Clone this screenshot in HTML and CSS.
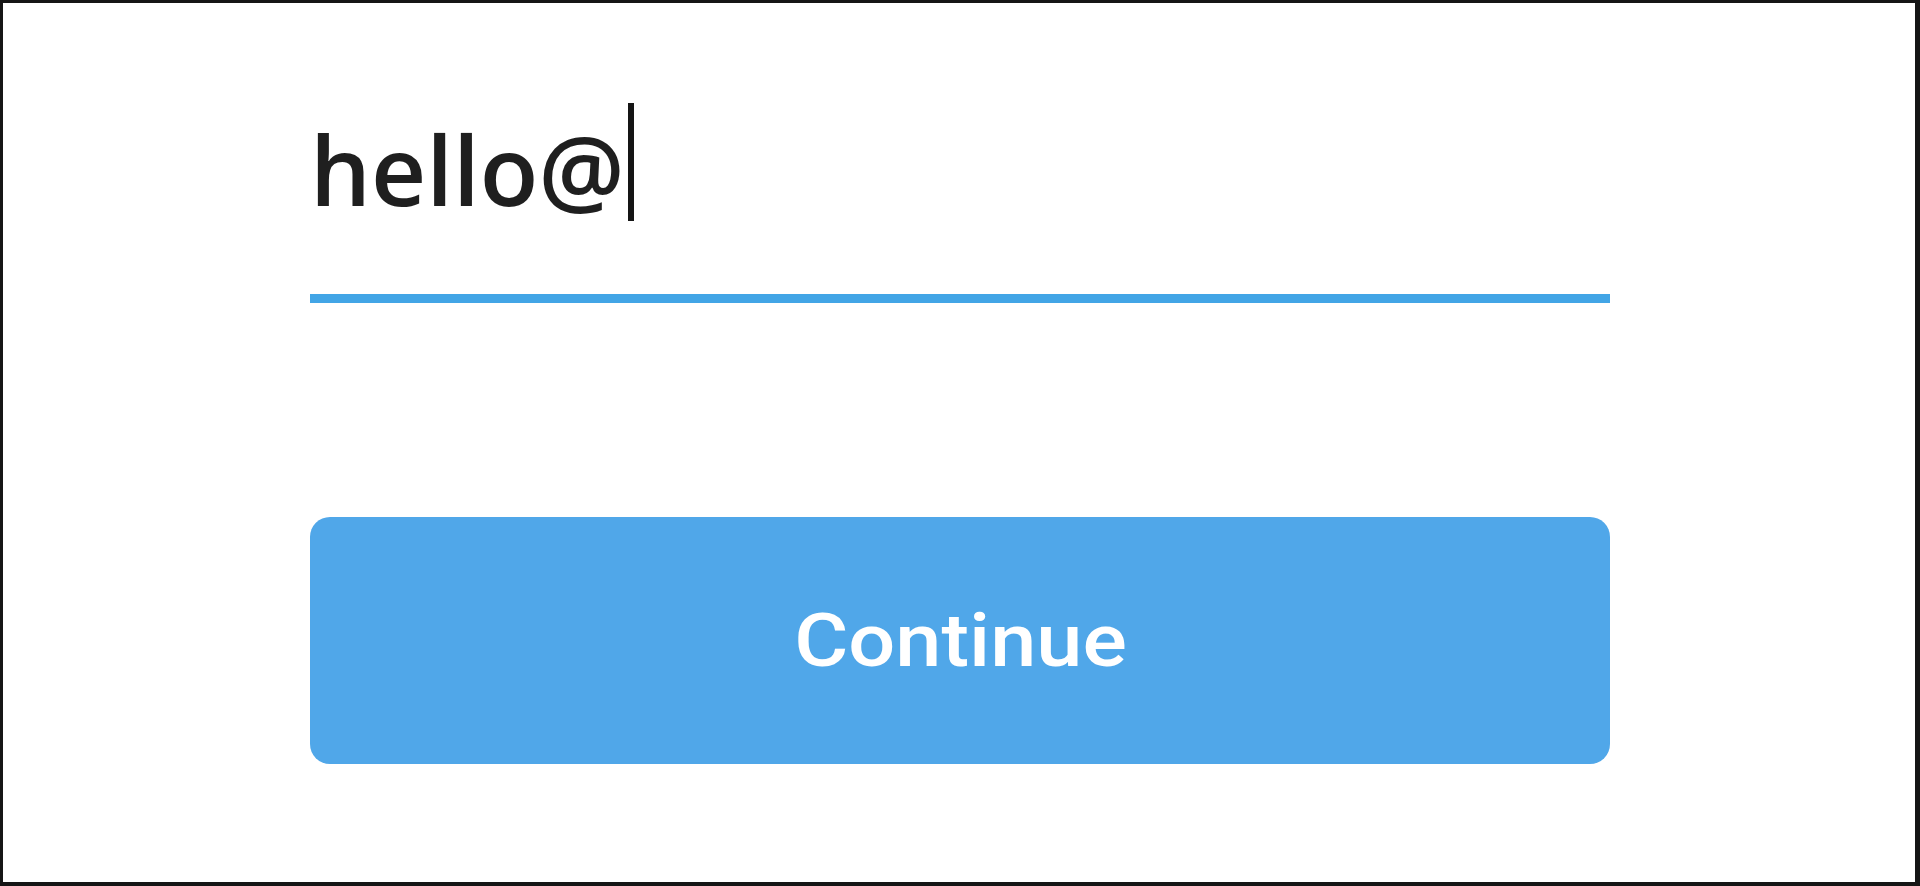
FILE: index.html
```html
<!DOCTYPE html>
<html lang="en">
<head>
  <meta charset="UTF-8">
  <meta name="viewport" content="width=device-width, initial-scale=1.0">
  <title>Sign in</title>
  <link rel="stylesheet" href="styles.css">
</head>
<body>
  <div class="frame">
    <form class="login" id="loginForm">
      <div class="email-field">
        <span class="email-value">hello@</span><span class="caret"></span>
      </div>
      <div class="email-line"></div>
      <button type="submit" class="continue-button"><span class="continue-label">Continue</span></button>
    </form>
  </div>
</body>
</html>
```

FILE: styles.css
```css
html,
body {
  margin: 0;
  padding: 0;
  height: 100%;
  background-color: #ffffff;
}

.frame {
  box-sizing: border-box;
  height: 100vh;
  border: 3px solid #151515;
  border-right-width: 5px;
  border-bottom-width: 4px;
  padding: 100px 0 0 307px;
}

.login {
  width: 1300px;
  display: flex;
  flex-direction: column;
}

.email-field {
  font-family: 'Open Sans', sans-serif;
  font-size: 96px;
  font-weight: 600;
  line-height: 132px;
  height: 132px;
  color: #1f1f1f;
  white-space: nowrap;
}

.caret {
  display: inline-block;
  width: 6px;
  height: 118px;
  margin-left: 3px;
  background-color: #151515;
  vertical-align: -15px;
}

.email-line {
  height: 9px;
  margin-top: 59px;
  background-color: #42a5e6;
}

.continue-button {
  margin-top: 214px;
  height: 247px;
  border: none;
  border-radius: 20px;
  background-color: #50a7e9;
  color: #ffffff;
  font-family: 'Roboto', sans-serif;
  font-weight: 500;
  font-size: 74px;
  cursor: pointer;
}

.continue-label {
  display: inline-block;
  transform: scaleX(1.12);
}
```
